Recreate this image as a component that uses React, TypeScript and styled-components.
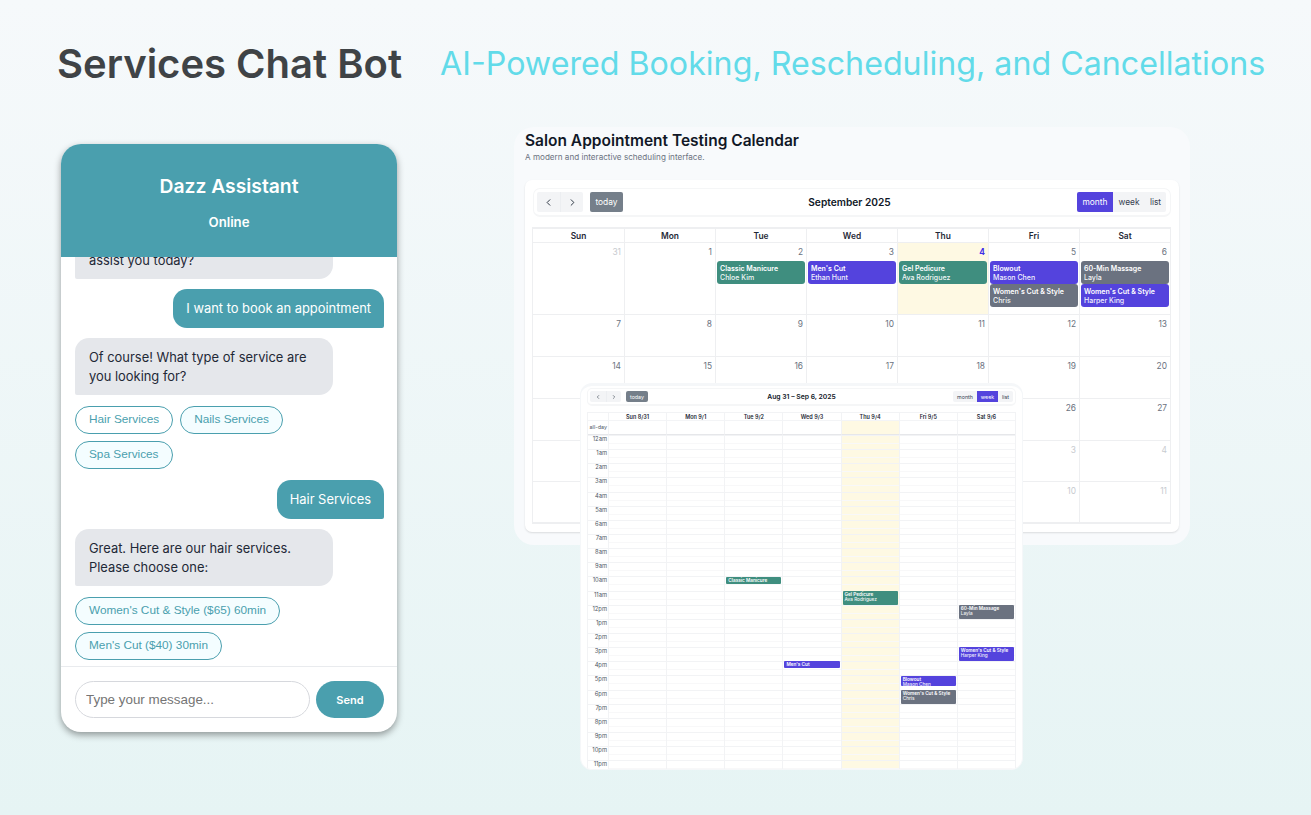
import React from "react";
import styled, { createGlobalStyle } from "styled-components";
import { ChevronLeft, ChevronRight } from "lucide-react";

const TEAL = "#4a9fae";
const C = { teal: "#3f8e7f", purple: "#5443dd", gray: "#6b7280" };
type Tone = keyof typeof C;

const Global = createGlobalStyle`
  html, body { margin: 0; padding: 0; }
  body { font-family: Inter, "Liberation Sans", sans-serif; }
  * { box-sizing: border-box; }
`;

const Page = styled.div`
  width: 1311px;
  height: 815px;
  overflow: hidden;
  background: linear-gradient(180deg, #f6f9fb 0%, #e6f4f4 100%);
`;
const Header = styled.header`
  display: flex;
  align-items: center;
  height: 127px;
  padding-left: 57px;
  gap: 38px;
`;
const Title = styled.h1`
  margin: 0;
  font-size: 40px;
  line-height: 46px;
  font-weight: 600;
  color: #3f4346;
  white-space: nowrap;
`;
const Subtitle = styled.h2`
  margin: 0;
  font-size: 32.2px;
  line-height: 46px;
  font-weight: 400;
  color: #62dbe9;
  white-space: nowrap;
`;
const Main = styled.main`
  display: flex;
  align-items: flex-start;
  padding-left: 61px;
  gap: 117px;
`;

/* Chat */
const Chat = styled.section`
  width: 336px;
  height: 588px;
  margin-top: 17px;
  flex: none;
  display: flex;
  flex-direction: column;
  background: #fff;
  border-radius: 20px;
  overflow: hidden;
  box-shadow: 0 3px 7px rgba(0, 0, 0, 0.38);
`;
const ChatHead = styled.div`
  height: 113px;
  flex: none;
  background: ${TEAL};
  color: #fff;
  display: flex;
  flex-direction: column;
  align-items: center;
  padding-top: 30px;
`;
const ChatName = styled.div`
  font-size: 19.3px;
  line-height: 24px;
  font-weight: 600;
`;
const ChatStatus = styled.div`
  margin-top: 16px;
  font-size: 13.2px;
  line-height: 16px;
  font-weight: 600;
`;
const Messages = styled.div`
  flex: 1;
  min-height: 0;
  overflow: hidden;
  display: flex;
  flex-direction: column;
  justify-content: flex-end;
  padding: 0 13px 6px 14px;
`;
const Bubble = styled.div<{ $mine?: boolean; $gap?: number }>`
  flex: none;
  font-size: 12.9px;
  line-height: 19px;
  padding: ${(p) => (p.$mine ? "10px 13px" : "10px 14px 9px")};
  margin-top: ${(p) => p.$gap ?? 10}px;
  border-radius: ${(p) => (p.$mine ? "14px 14px 2px 14px" : "14px 14px 14px 2px")};
  background: ${(p) => (p.$mine ? TEAL : "#e5e7eb")};
  color: ${(p) => (p.$mine ? "#fff" : "#1f2937")};
  align-self: ${(p) => (p.$mine ? "flex-end" : "flex-start")};
  width: ${(p) => (p.$mine ? "auto" : "258px")};
`;
const ChipRow = styled.div`
  display: flex;
  flex-wrap: wrap;
  gap: 7px;
  margin-top: 11px;
  flex: none;
`;
const Chip = styled.button<{ $tint?: boolean }>`
  height: 28px;
  padding: 0 13px 2px;
  font: 400 11.8px "Liberation Sans", Arial, sans-serif;
  color: ${TEAL};
  background: ${(p) => (p.$tint ? "#f4fdff" : "#fff")};
  border: 1px solid ${TEAL};
  border-radius: 14px;
  white-space: nowrap;
`;
const Composer = styled.div`
  height: 66px;
  flex: none;
  border-top: 1px solid #e9ebee;
  display: flex;
  align-items: flex-start;
  gap: 6px;
  padding: 14px 13px 0 14px;
`;
const Input = styled.input`
  flex: 1;
  min-width: 0;
  height: 37px;
  border: 1px solid #d6d8dd;
  border-radius: 19px;
  padding: 0 10px;
  font: 400 13.4px "Liberation Sans", Arial, sans-serif;
  outline: none;
  &::placeholder { color: #757575; opacity: 1; }
`;
const Send = styled.button`
  width: 68px;
  height: 37px;
  border: 0;
  border-radius: 19px;
  background: ${TEAL};
  color: #fff;
  font: 600 11px Inter, sans-serif;
`;

/* Calendars */
const CalArea = styled.div`
  position: relative;
  width: 676px;
  flex: none;
`;
const MonthPanel = styled.section`
  height: 418px;
  background: #f8fafc;
  border-radius: 20px;
  padding: 4px 11px 0;
`;
const CalTitle = styled.h3`
  margin: 0;
  font-size: 15.5px;
  line-height: 19px;
  font-weight: 600;
  color: #111827;
`;
const CalSub = styled.p`
  margin: 1px 0 0;
  font-size: 8.15px;
  line-height: 12px;
  color: #6b7280;
`;
const MonthCard = styled.div`
  margin-top: 17px;
  height: 352px;
  background: #fff;
  border-radius: 7px;
  padding: 8px 8px 0;
  box-shadow: 0 1px 2px rgba(0, 0, 0, 0.12);
`;
const Toolbar = styled.div<{ $small?: boolean }>`
  display: flex;
  align-items: center;
  justify-content: space-between;
  height: ${(p) => (p.$small ? 18 : 29)}px;
  padding: ${(p) => (p.$small ? "0 2px" : "0 4px 0 3px")};
  border: 1px solid #f5f6f7;
  border-bottom-width: 2px;
  border-radius: ${(p) => (p.$small ? 5 : 7)}px;
`;
const ToolGroup = styled.div`
  display: flex;
  align-items: center;
  width: 108px;
  gap: 7px;
  &:last-child { justify-content: flex-end; width: 112px; }
`;
const ToolGroupSmall = styled(ToolGroup)`
  gap: 5px;
  width: 70px;
  &:last-child { width: 70px; }
`;
const BtnGroup = styled.div`
  display: flex;
  flex: none;
  border-radius: 2px;
  overflow: hidden;
  background: #f3f4f6;
`;
const NavBtn = styled.span<{ $small?: boolean }>`
  display: flex;
  align-items: center;
  justify-content: center;
  width: ${(p) => (p.$small ? 15.5 : 23)}px;
  height: ${(p) => (p.$small ? 11.5 : 20)}px;
  color: #1f2937;
  & + & { border-left: 1px solid #eceef1; }
`;
const ViewBtn = styled.span<{ $on?: boolean; $w: number; $small?: boolean }>`
  display: flex;
  align-items: center;
  justify-content: center;
  width: ${(p) => p.$w}px;
  height: ${(p) => (p.$small ? 11.5 : 20)}px;
  font-size: ${(p) => (p.$small ? 5.3 : 8.4)}px;
  color: ${(p) => (p.$on ? "#fff" : "#374151")};
  background: ${(p) => (p.$on ? C.purple : "transparent")};
`;
const Today = styled.span<{ $small?: boolean }>`
  display: flex;
  flex: none;
  align-items: center;
  justify-content: center;
  width: ${(p) => (p.$small ? 22 : 33)}px;
  height: ${(p) => (p.$small ? 11.5 : 20)}px;
  border-radius: 2px;
  font-size: ${(p) => (p.$small ? 5.3 : 8.4)}px;
  color: #fff;
  background: #757f8a;
`;
const ToolTitle = styled.div<{ $small?: boolean }>`
  font-size: ${(p) => (p.$small ? 6.8 : 10.2)}px;
  font-weight: 600;
  color: #111827;
`;

const MonthGrid = styled.div`
  margin: 10px 0 0 -1px;
  width: 639px;
  border: 1px solid #eeeff1;
  border-top-width: 2px;
  display: grid;
  grid-template-columns: repeat(7, 1fr);
  grid-template-rows: 14px 72px 42px 42px 42px 41px 41px;
`;
const MonthHead = styled.div`
  font-size: 8.4px;
  font-weight: 600;
  line-height: 14px;
  text-align: center;
  color: #1f2937;
  border-left: 1px solid #eeeff1;
  border-bottom: 1px solid #eeeff1;
  &:first-child { border-left: 0; }
`;
const DayCell = styled.div<{ $today?: boolean; $first?: boolean }>`
  border-left: ${(p) => (p.$first ? "0" : "1px solid #eeeff1")};
  border-bottom: 1px solid #eeeff1;
  background: ${(p) => (p.$today ? "#fef9e3" : "transparent")};
  padding: 4px 1px 0;
  min-width: 0;
  overflow: hidden;
`;
const DayNum = styled.div<{ $off?: boolean; $today?: boolean }>`
  font-size: 8.4px;
  line-height: 10px;
  text-align: right;
  padding-right: 2px;
  font-weight: ${(p) => (p.$today ? 700 : 400)};
  color: ${(p) => (p.$today ? "#3f2fe8" : p.$off ? "#c8cbd0" : "#6b7280")};
`;
const MonthEvents = styled.div`
  margin-top: 4px;
  display: flex;
  flex-direction: column;
`;
const MonthEvent = styled.div<{ $tone: Tone }>`
  height: 23px;
  padding: 3px 3px 0;
  border-radius: 3px;
  background: ${(p) => C[p.$tone]};
  color: #fff;
  font-size: 7px;
  line-height: 9px;
  white-space: nowrap;
  overflow: hidden;
`;
const EvTitle = styled.div`
  font-weight: 600;
`;
const EvSub = styled.div`
  font-weight: 500;
  opacity: 0.92;
`;

const WeekPanel = styled.section`
  position: absolute;
  left: 66px;
  top: 256px;
  width: 443px;
  height: 387px;
  background: #fff;
  border: 1px solid #f5f7f9;
  border-top-width: 3px;
  border-radius: 12px;
  padding: 2px 6px 0;
  overflow: hidden;
`;
const WeekHeadRow = styled.div`
  margin-top: 6px;
  display: grid;
  grid-template-columns: 20px repeat(7, 1fr);
  width: 429px;
  border: 1px solid #f2f3f5;
  border-bottom: 0;
`;
const WeekHead = styled.div`
  height: 8px;
  font-size: 5.5px;
  line-height: 8px;
  font-weight: 600;
  text-align: center;
  color: #1f2937;
  border-left: 1px solid #f2f3f5;
  border-bottom: 1px solid #f3f4f6;
  &:first-child { border-left: 0; }
`;
const AllDay = styled.div<{ $today?: boolean; $label?: boolean }>`
  height: 14px;
  font-size: 5.4px;
  line-height: 12px;
  text-align: right;
  padding-right: 1px;
  color: #4b5563;
  white-space: nowrap;
  border-left: ${(p) => (p.$label ? "0" : "1px solid #f2f3f5")};
  border-bottom: 1.5px solid #e6e7ea;
  background: ${(p) => (p.$today ? "#fef9e3" : "transparent")};
`;
const WeekBody = styled.div`
  display: grid;
  grid-template-columns: 20px repeat(7, 1fr);
  width: 429px;
  border-left: 1px solid #f2f3f5;
  border-right: 1px solid #f2f3f5;
`;
const Gutter = styled.div`
  display: flex;
  flex-direction: column;
`;
const HourLabel = styled.div`
  height: 14.15px;
  flex: none;
  font-size: 5.8px;
  line-height: 6px;
  text-align: right;
  padding-right: 1px;
  color: #4b5563;
  border-top: 1px solid #f2f3f5;
`;
const DayCol = styled.div<{ $today?: boolean }>`
  position: relative;
  border-left: 1px solid #f2f3f5;
  background: ${(p) => (p.$today ? "#fef9e3" : "transparent")};
`;
const HourSlot = styled.div`
  height: 14.15px;
  border-top: 1px solid #f2f3f5;
  &::after {
    content: "";
    display: block;
    height: 7px;
    border-bottom: 1px solid #f8f8f9;
  }
`;
const WeekEvent = styled.div<{ $tone: Tone; $hour: number; $h: number }>`
  position: absolute;
  left: 1px;
  right: 1px;
  top: ${(p) => p.$hour * 14.15}px;
  height: ${(p) => p.$h}px;
  padding: 1px 2px 0;
  border-radius: 1px;
  background: ${(p) => C[p.$tone]};
  color: #fff;
  font-size: 4.7px;
  line-height: 5px;
  white-space: nowrap;
  overflow: hidden;
`;

const DOW = ["Sun", "Mon", "Tue", "Wed", "Thu", "Fri", "Sat"];
const WEEKS: [number, boolean][][] = [
  [[31, true], [1, false], [2, false], [3, false], [4, false], [5, false], [6, false]],
  [7, 8, 9, 10, 11, 12, 13].map((d) => [d, false]),
  [14, 15, 16, 17, 18, 19, 20].map((d) => [d, false]),
  [21, 22, 23, 24, 25, 26, 27].map((d) => [d, false]),
  [[28, false], [29, false], [30, false], [1, true], [2, true], [3, true], [4, true]],
  [5, 6, 7, 8, 9, 10, 11].map((d) => [d, true]),
];
type Ev = { t: string; s: string; tone: Tone };
const MONTH_EVENTS: Record<number, Ev[]> = {
  2: [{ t: "Classic Manicure", s: "Chloe Kim", tone: "teal" }],
  3: [{ t: "Men's Cut", s: "Ethan Hunt", tone: "purple" }],
  4: [{ t: "Gel Pedicure", s: "Ava Rodriguez", tone: "teal" }],
  5: [
    { t: "Blowout", s: "Mason Chen", tone: "purple" },
    { t: "Women's Cut & Style", s: "Chris", tone: "gray" },
  ],
  6: [
    { t: "60-Min Massage", s: "Layla", tone: "gray" },
    { t: "Women's Cut & Style", s: "Harper King", tone: "purple" },
  ],
};
const WEEK_HEADS = ["Sun 8/31", "Mon 9/1", "Tue 9/2", "Wed 9/3", "Thu 9/4", "Fri 9/5", "Sat 9/6"];
const HOURS = ["12am", ...Array.from({ length: 11 }, (_, i) => `${i + 1}am`), "12pm", ...Array.from({ length: 11 }, (_, i) => `${i + 1}pm`)];
type WEv = { t: string; s?: string; tone: Tone; hour: number; h: number };
const WEEK_EVENTS: Record<number, WEv[]> = {
  2: [{ t: "Classic Manicure", tone: "teal", hour: 10, h: 7 }],
  3: [{ t: "Men's Cut", tone: "purple", hour: 16, h: 7 }],
  4: [{ t: "Gel Pedicure", s: "Ava Rodriguez", tone: "teal", hour: 11, h: 14 }],
  5: [
    { t: "Blowout", s: "Mason Chen", tone: "purple", hour: 17, h: 10 },
    { t: "Women's Cut & Style", s: "Chris", tone: "gray", hour: 18, h: 14 },
  ],
  6: [
    { t: "60-Min Massage", s: "Layla", tone: "gray", hour: 12, h: 14 },
    { t: "Women's Cut & Style", s: "Harper King", tone: "purple", hour: 15, h: 14 },
  ],
};

export default function App() {
  return (
    <Page>
      <Global />
      <Header>
        <Title>Services Chat Bot</Title>
        <Subtitle>AI-Powered Booking, Rescheduling, and Cancellations</Subtitle>
      </Header>
      <Main>
        <Chat>
          <ChatHead>
            <ChatName>Dazz Assistant</ChatName>
            <ChatStatus>Online</ChatStatus>
          </ChatHead>
          <Messages>
            <Bubble>Hi! I'm your assistant. How can I assist you today?</Bubble>
            <Bubble $mine>I want to book an appointment</Bubble>
            <Bubble>Of course! What type of service are you looking for?</Bubble>
            <ChipRow>
              <Chip>Hair Services</Chip>
              <Chip $tint>Nails Services</Chip>
              <Chip $tint>Spa Services</Chip>
            </ChipRow>
            <Bubble $mine $gap={11}>Hair Services</Bubble>
            <Bubble>Great. Here are our hair services. Please choose one:</Bubble>
            <ChipRow>
              <Chip $tint>Women's Cut &amp; Style ($65) 60min</Chip>
              <Chip $tint>Men's Cut ($40) 30min</Chip>
            </ChipRow>
          </Messages>
          <Composer>
            <Input placeholder="Type your message..." readOnly />
            <Send>Send</Send>
          </Composer>
        </Chat>
        <CalArea>
          <MonthPanel>
            <CalTitle>Salon Appointment Testing Calendar</CalTitle>
            <CalSub>A modern and interactive scheduling interface.</CalSub>
            <MonthCard>
              <Toolbar>
                <ToolGroup>
                  <BtnGroup>
                    <NavBtn><ChevronLeft size={11} /></NavBtn>
                    <NavBtn><ChevronRight size={11} /></NavBtn>
                  </BtnGroup>
                  <Today>today</Today>
                </ToolGroup>
                <ToolTitle>September 2025</ToolTitle>
                <ToolGroup>
                  <BtnGroup>
                    <ViewBtn $on $w={36}>month</ViewBtn>
                    <ViewBtn $w={32}>week</ViewBtn>
                    <ViewBtn $w={21}>list</ViewBtn>
                  </BtnGroup>
                </ToolGroup>
              </Toolbar>
              <MonthGrid>
                {DOW.map((d) => <MonthHead key={d}>{d}</MonthHead>)}
                {WEEKS.map((week, w) =>
                  week.map(([d, off], i) => {
                    const today = w === 0 && d === 4;
                    const evs = w === 0 && !off ? MONTH_EVENTS[d] : undefined;
                    return (
                      <DayCell key={`${w}-${i}`} $today={today} $first={i === 0}>
                        <DayNum $off={off} $today={today}>{d}</DayNum>
                        {evs && (
                          <MonthEvents>
                            {evs.map((e) => (
                              <MonthEvent key={e.t} $tone={e.tone}>
                                <EvTitle>{e.t}</EvTitle>
                                <EvSub>{e.s}</EvSub>
                              </MonthEvent>
                            ))}
                          </MonthEvents>
                        )}
                      </DayCell>
                    );
                  })
                )}
              </MonthGrid>
            </MonthCard>
          </MonthPanel>
          <WeekPanel>
            <Toolbar $small>
              <ToolGroupSmall>
                <BtnGroup>
                  <NavBtn $small><ChevronLeft size={6} /></NavBtn>
                  <NavBtn $small><ChevronRight size={6} /></NavBtn>
                </BtnGroup>
                <Today $small>today</Today>
              </ToolGroupSmall>
              <ToolTitle $small>Aug 31 – Sep 6, 2025</ToolTitle>
              <ToolGroupSmall>
                <BtnGroup>
                  <ViewBtn $small $w={24}>month</ViewBtn>
                  <ViewBtn $small $on $w={21}>week</ViewBtn>
                  <ViewBtn $small $w={15}>list</ViewBtn>
                </BtnGroup>
              </ToolGroupSmall>
            </Toolbar>
            <WeekHeadRow>
              <WeekHead />
              {WEEK_HEADS.map((d) => <WeekHead key={d}>{d}</WeekHead>)}
              <AllDay $label>all-day</AllDay>
              {WEEK_HEADS.map((d, i) => <AllDay key={d} $today={i === 4} />)}
            </WeekHeadRow>
            <WeekBody>
              <Gutter>
                {HOURS.map((h) => <HourLabel key={h}>{h}</HourLabel>)}
              </Gutter>
              {WEEK_HEADS.map((d, i) => (
                <DayCol key={d} $today={i === 4}>
                  {HOURS.map((h) => <HourSlot key={h} />)}
                  {(WEEK_EVENTS[i] ?? []).map((e) => (
                    <WeekEvent key={e.t} $tone={e.tone} $hour={e.hour} $h={e.h}>
                      <EvTitle>{e.t}</EvTitle>
                      {e.s && <EvSub>{e.s}</EvSub>}
                    </WeekEvent>
                  ))}
                </DayCol>
              ))}
            </WeekBody>
          </WeekPanel>
        </CalArea>
      </Main>
    </Page>
  );
}
